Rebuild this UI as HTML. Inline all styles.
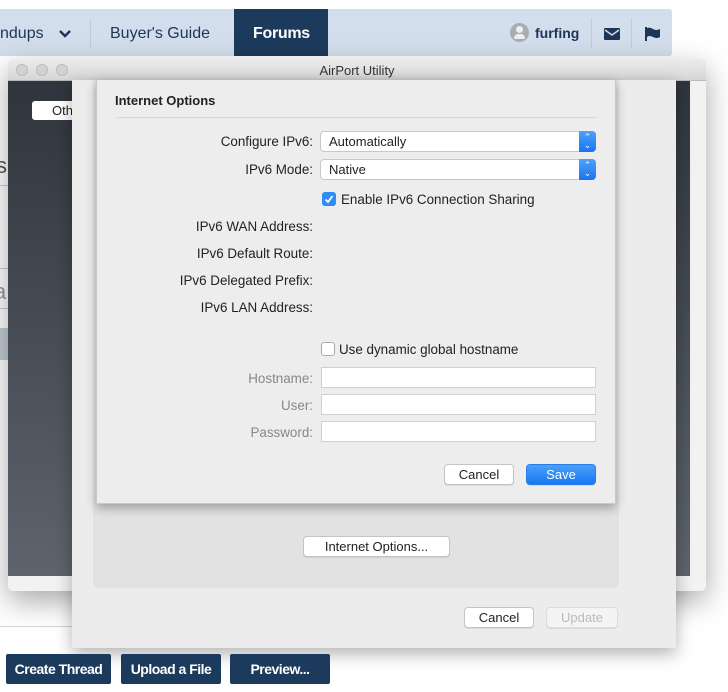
<!DOCTYPE html>
<html><head><meta charset="utf-8"><style>
*{margin:0;padding:0;box-sizing:border-box}
body{width:728px;height:692px;position:relative;overflow:hidden;background:#fff;font-family:"Liberation Sans",Arial,sans-serif;font-size:13px;color:#222}
.abs{position:absolute}
.nav{left:0;top:9px;width:672px;height:47px;background:#d3deec;border-radius:0 3px 3px 0}
.nav span{position:absolute;top:16px;font-size:16px;color:#1d3557}
.btn{position:absolute;background:#fff;border:1px solid #c4c4c4;border-radius:4px;text-align:center;font-size:13px;line-height:19px;color:#222;box-shadow:0 1px 0 rgba(0,0,0,.08)}
.pop{position:absolute;left:320px;width:276px;height:21px;background:#fff;border:1px solid #c8c8c8;border-radius:4px;font-size:13px;line-height:19px;padding-left:8px}
.pop i{position:absolute;right:-1px;top:-1px;width:17px;height:21px;background:linear-gradient(#4da2fb,#1a74f0);border-radius:0 4px 4px 0;color:#fff;font-style:normal;font-size:9px;line-height:8px;text-align:center;padding-top:2px}
.tf{position:absolute;left:321px;width:275px;height:21px;background:#fff;border:1px solid #d0d0d0}
.gl{position:absolute;width:300px;text-align:right;left:13px;font-size:13.4px;color:#222}
.bb{position:absolute;top:654px;height:30px;background:#1c3a5c;color:#fff;font-weight:bold;font-size:14px;line-height:30px;text-align:center;border-radius:2px;letter-spacing:-.5px}
</style></head><body>
<div class="abs nav">
 <span style="left:0">ndups</span>
 <svg class="abs" style="left:58px;top:20px" width="14" height="10" viewBox="0 0 14 10"><path d="M2 2l5 5 5-5" stroke="#1d3557" stroke-width="2.4" fill="none"/></svg>
 <div class="abs" style="left:90px;top:10px;width:1px;height:30px;background:#bfccdc"></div>
 <span style="left:110px">Buyer's Guide</span>
 <div class="abs" style="left:234px;top:0;width:94px;height:47px;background:#1c3a5c"></div>
 <span style="left:253px;color:#fff;font-weight:bold;letter-spacing:-.3px">Forums</span>
 <div class="abs" style="left:510px;top:14px;width:19px;height:19px;border-radius:50%;background:#a9adb3"></div>
 <div class="abs" style="left:516px;top:17px;width:7px;height:7px;border-radius:50%;background:#eee"></div>
 <div class="abs" style="left:514px;top:25px;width:11px;height:5px;border-radius:5px 5px 1px 1px;background:#eee"></div>
 <span style="left:535px;font-size:14px;font-weight:bold;top:16px">furfing</span>
 <div class="abs" style="left:591px;top:9px;width:1px;height:30px;background:#bfccdc"></div>
 <svg class="abs" style="left:604px;top:19px" width="16" height="12" viewBox="0 0 16 12"><rect width="16" height="12" rx="1" fill="#1d3557"/><path d="M1 2l7 5 7-5" stroke="#d3deec" stroke-width="1.4" fill="none"/></svg>
 <div class="abs" style="left:631px;top:9px;width:1px;height:30px;background:#bfccdc"></div>
 <svg class="abs" style="left:645px;top:18px" width="16" height="14" viewBox="0 0 16 14"><rect x="0" y="0" width="2" height="14" fill="#1d3557"/><path d="M2 1q3 -1 6 1t7 0v8q-3 2-7 0t-6 0z" fill="#1d3557"/></svg>
</div>
<div class="abs" style="left:0;top:185px;width:8px;height:1px;background:#ccc"></div>
<div class="abs" style="left:-4px;top:153px;font-size:22px;color:#555">s</div>
<div class="abs" style="left:0;top:268px;width:8px;height:1px;background:#ccc"></div>
<div class="abs" style="left:-6px;top:279px;font-size:22px;color:#999">a</div>
<div class="abs" style="left:0;top:308px;width:8px;height:1px;background:#ccc"></div>
<div class="abs" style="left:0;top:328px;width:8px;height:32px;background:#c4ccd6"></div>
<div class="abs" style="left:0;top:626px;width:72px;height:1px;background:#cfd6de"></div>
<div class="abs" style="left:8px;top:59px;width:698px;height:532px;background:#f2f2f2;border-radius:5px;box-shadow:0 10px 30px rgba(0,0,0,.35)">
 <div class="abs" style="left:0;top:0;width:698px;height:22px;background:linear-gradient(#ececec,#d6d6d6);border-radius:5px 5px 0 0;border-bottom:1px solid #b8b8b8;text-align:center;font-size:13px;line-height:23px;color:#333">AirPort Utility</div>
 <div class="abs" style="left:8px;top:5px;width:12px;height:12px;border-radius:50%;background:#d2d2d2;border:1px solid #bbb"></div>
 <div class="abs" style="left:28px;top:5px;width:12px;height:12px;border-radius:50%;background:#d2d2d2;border:1px solid #bbb"></div>
 <div class="abs" style="left:48px;top:5px;width:12px;height:12px;border-radius:50%;background:#d2d2d2;border:1px solid #bbb"></div>
 <div class="abs" style="left:0;top:22px;width:682px;height:495px;background:linear-gradient(#2f353d,#5e646d)"></div>
 <div class="abs" style="left:24px;top:42px;width:50px;height:19px;background:#fff;border-radius:3px;font-size:13px;line-height:19px;padding-left:20px">Oth</div>
</div>
<div class="abs" style="left:72px;top:80px;width:604px;height:568px;background:#ececec;box-shadow:0 6px 16px rgba(0,0,0,.3)">
 <div class="abs" style="left:21px;top:0;width:526px;height:508px;background:#e2e2e2;border-radius:0 0 5px 5px"></div>
 <div class="btn" style="left:231px;top:456px;width:147px;height:21px">Internet Options...</div>
 <div class="btn" style="left:392px;top:527px;width:70px;height:21px">Cancel</div>
 <div class="btn" style="left:474px;top:527px;width:72px;height:21px;color:#bbb;border-color:#ddd;background:#f4f4f4">Update</div>
</div>
<div class="abs" style="left:96px;top:80px;width:520px;height:424px;background:#ededed;border:1px solid #c8c8c8;border-top:none;box-shadow:0 4px 10px rgba(0,0,0,.3)">
 <div class="abs" style="left:18px;top:13px;font-weight:bold;font-size:13px">Internet Options</div>
 <div class="abs" style="left:20px;top:37px;width:480px;height:1px;background:#d8d8d8"></div>
</div>
<div class="gl" style="top:134px">Configure IPv6:</div>
<div class="pop" style="top:131px">Automatically<i>⌃<br>⌄</i></div>
<div class="gl" style="top:162px">IPv6 Mode:</div>
<div class="pop" style="top:159px">Native<i>⌃<br>⌄</i></div>
<div class="abs" style="left:322px;top:192px;width:14px;height:14px;border-radius:3px;background:#2f8cf6"></div>
<svg class="abs" style="left:322px;top:192px" width="14" height="14" viewBox="0 0 14 14"><path d="M3.5 7.5l2.5 2.5 4.5-6" stroke="#fff" stroke-width="1.8" fill="none"/></svg>
<div class="abs" style="left:341px;top:192px;font-size:13.4px">Enable IPv6 Connection Sharing</div>
<div class="gl" style="top:219px">IPv6 WAN Address:</div>
<div class="gl" style="top:246px">IPv6 Default Route:</div>
<div class="gl" style="top:273px">IPv6 Delegated Prefix:</div>
<div class="gl" style="top:300px">IPv6 LAN Address:</div>
<div class="abs" style="left:321px;top:342px;width:14px;height:14px;border-radius:3px;background:#fff;border:1px solid #aaa"></div>
<div class="abs" style="left:339px;top:342px;font-size:13.4px">Use dynamic global hostname</div>
<div class="gl" style="top:371px;color:#888">Hostname:</div>
<div class="tf" style="top:367px"></div>
<div class="gl" style="top:398px;color:#888">User:</div>
<div class="tf" style="top:394px"></div>
<div class="gl" style="top:425px;color:#888">Password:</div>
<div class="tf" style="top:421px"></div>
<div class="btn" style="left:444px;top:464px;width:70px;height:21px">Cancel</div>
<div class="btn" style="left:526px;top:464px;width:70px;height:21px;background:linear-gradient(#4aa0fb,#1877f2);border-color:#2a7de8;color:#fff">Save</div>
<div class="bb" style="left:6px;width:105px">Create Thread</div>
<div class="bb" style="left:121px;width:100px">Upload a File</div>
<div class="bb" style="left:230px;width:100px">Preview...</div>
</body></html>
